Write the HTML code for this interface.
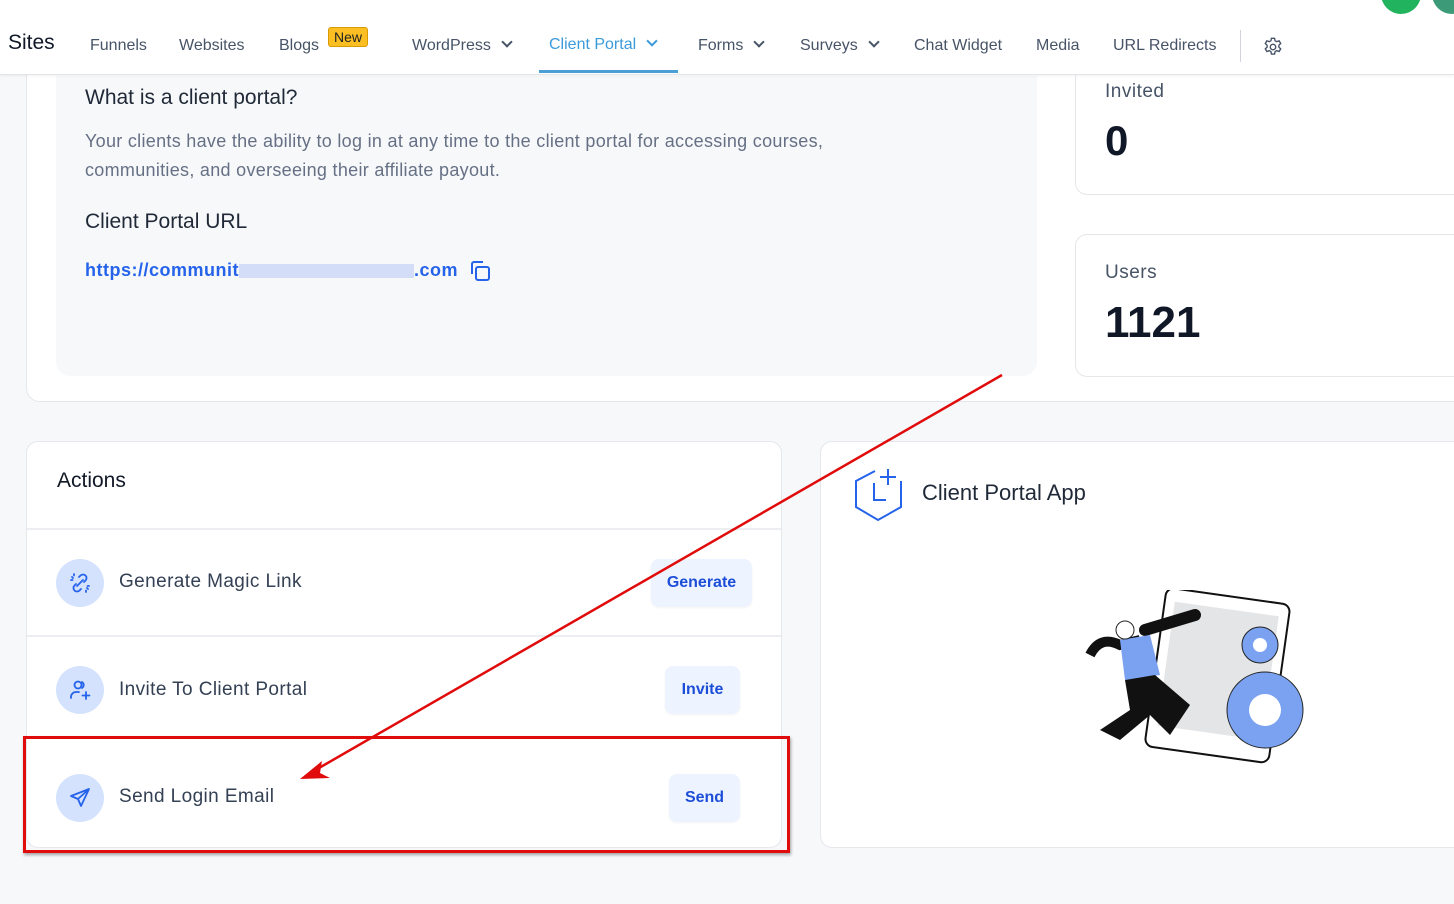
<!DOCTYPE html>
<html><head><meta charset="utf-8"><style>
*{box-sizing:border-box;margin:0;padding:0}
body{width:1454px;height:904px;overflow:hidden;background:#f7f8fa;font-family:"Liberation Sans",sans-serif;position:relative;color:#1f2937}
.nav{position:absolute;left:0;top:0;width:1454px;height:75px;background:#fff;border-bottom:1px solid #e3e5e8;box-shadow:0 1px 3px rgba(0,0,0,.06);z-index:10}
.nav span{position:absolute;top:37px;font-size:16px;color:#475467}
.chev{display:inline-block;width:8px;height:8px;border-right:2px solid #475467;border-bottom:2px solid #475467;transform:rotate(45deg);margin-left:12px;position:relative;top:-4px}
.abs{position:absolute}
.card{position:absolute;background:#fff;border:1px solid #e5e7eb;border-radius:12px}
.btn{position:absolute;background:#eef4ff;color:#1d4ed8;font-weight:bold;font-size:16px;border-radius:8px;text-align:center;box-shadow:0 1px 2px rgba(0,0,0,.05)}
.ic{position:absolute;left:56px;width:48px;height:48px;border-radius:50%;background:#d4e2fd}
.rowt{position:absolute;left:119px;font-size:19px;color:#344054;letter-spacing:.4px}
</style></head><body>
<div class="nav">
<span style="left:8px;top:31px;font-size:21px;color:#111827">Sites</span>
<span style="left:90px">Funnels</span>
<span style="left:179px">Websites</span>
<span style="left:279px">Blogs</span>
<span style="left:328px;top:27px;background:#fbbf24;border:1px solid #d99a00;border-radius:3px;font-size:14px;color:#222;padding:0 5px;line-height:18px">New</span>
<span style="left:412px">WordPress<i class="chev"></i></span>
<span style="left:549px;top:36px;color:#3b9ad9">Client Portal<i class="chev" style="border-color:#3b9ad9"></i></span>
<div class="abs" style="left:539px;top:70px;width:139px;height:3px;background:#4b9fd5"></div>
<span style="left:698px">Forms<i class="chev"></i></span>
<span style="left:800px">Surveys<i class="chev"></i></span>
<span style="left:914px">Chat Widget</span>
<span style="left:1036px">Media</span>
<span style="left:1113px">URL Redirects</span>
<div class="abs" style="left:1240px;top:30px;width:1px;height:32px;background:#d1d5db"></div>
<svg class="abs" style="left:1262px;top:36px" width="22" height="22" viewBox="0 0 24 24" fill="none" stroke="#475467" stroke-width="1.5"><path d="M10.3 2.5h3.4l.6 2.7 1.8 1 2.6-.9 1.7 2.9-2 1.9v2l2 1.9-1.7 2.9-2.6-.9-1.8 1-.6 2.7h-3.4l-.6-2.7-1.8-1-2.6.9-1.7-2.9 2-1.9v-2l-2-1.9 1.7-2.9 2.6.9 1.8-1z"/><circle cx="12" cy="12" r="3"/></svg>
<div class="abs" style="left:1381px;top:-26px;width:40px;height:40px;border-radius:50%;background:#22b35e"></div>
<div class="abs" style="left:1432px;top:-26px;width:40px;height:40px;border-radius:50%;background:#3d9a78"></div>
</div>

<div class="card" style="left:26px;top:60px;width:1460px;height:342px;border-radius:14px"></div>
<div class="abs" style="left:56px;top:76px;width:981px;height:300px;background:#f7f8fa;border-radius:0 0 14px 14px"></div>
<div class="abs" style="left:85px;top:86px;font-size:21px;color:#1f2937">What is a client portal?</div>
<div class="abs" style="left:85px;top:127px;width:835px;font-size:18px;line-height:29px;color:#667085;letter-spacing:.3px">Your clients have the ability to log in at any time to the client portal for accessing courses, communities, and overseeing their affiliate payout.</div>
<div class="abs" style="left:85px;top:210px;font-size:21px;color:#1f2937">Client Portal URL</div>
<div class="abs" style="left:85px;top:260px;font-size:18px;font-weight:bold;color:#2563eb;letter-spacing:.5px">https://communit<span style="display:inline-block;width:175px;height:14px;background:#c9d6f7;opacity:.8;vertical-align:middle"></span>.com</div>
<svg class="abs" style="left:468px;top:259px" width="24" height="24" viewBox="0 0 24 24" fill="none" stroke="#2563eb" stroke-width="2"><rect x="8" y="8" width="13" height="13" rx="2"/><path d="M4 15V5a2 2 0 0 1 2-2h9"/></svg>

<div class="card" style="left:1075px;top:40px;width:420px;height:155px"></div>
<div class="abs" style="left:1105px;top:81px;font-size:19px;color:#475467;letter-spacing:.5px">Invited</div>
<div class="abs" style="left:1105px;top:117px;font-size:42px;font-weight:bold;color:#101828">0</div>
<div class="card" style="left:1075px;top:234px;width:420px;height:143px"></div>
<div class="abs" style="left:1105px;top:262px;font-size:19px;color:#475467;letter-spacing:.5px">Users</div>
<div class="abs" style="left:1105px;top:298px;font-size:44px;font-weight:bold;color:#101828">1121</div>

<div class="card" style="left:26px;top:441px;width:756px;height:407px"></div>
<div class="abs" style="left:57px;top:469px;font-size:21px;color:#111827">Actions</div>
<div class="abs" style="left:27px;top:528px;width:754px;height:2px;background:#eceef1"></div>
<div class="abs" style="left:27px;top:635px;width:754px;height:2px;background:#eceef1"></div>
<div class="ic" style="top:559px"><svg style="margin:12px" width="24" height="24" viewBox="0 0 24 24" fill="none" stroke="#2563eb" stroke-width="1.8" stroke-linecap="round"><path d="M9 15l6-6M11 6l1.5-1.5a3.5 3.5 0 0 1 5 5L16 11M13 18l-1.5 1.5a3.5 3.5 0 0 1-5-5L8 13M4 6l1 1M6 3v1.5M3 9h1.5M20 18l-1-1M18 21v-1.5M21 15h-1.5"/></svg></div>
<div class="rowt" style="top:571px">Generate Magic Link</div>
<div class="btn" style="left:651px;top:559px;width:101px;height:48px;line-height:48px">Generate</div>
<div class="ic" style="top:666px"><svg style="margin:12px" width="24" height="24" viewBox="0 0 24 24" fill="none" stroke="#2563eb" stroke-width="1.8" stroke-linecap="round"><circle cx="10" cy="7" r="3.5"/><path d="M3 20v-1a5 5 0 0 1 5-5h3M18 14v7M14.5 17.5h7M14 4a3.5 3.5 0 0 1 0 6"/></svg></div>
<div class="rowt" style="top:679px">Invite To Client Portal</div>
<div class="btn" style="left:665px;top:666px;width:75px;height:48px;line-height:48px">Invite</div>
<div class="ic" style="top:774px"><svg style="margin:12px" width="24" height="24" viewBox="0 0 24 24" fill="none" stroke="#2563eb" stroke-width="1.8" stroke-linejoin="round"><path d="M21 3L3 10l7 3 3 7zM21 3L10 13"/></svg></div>
<div class="rowt" style="top:786px">Send Login Email</div>
<div class="btn" style="left:669px;top:774px;width:71px;height:48px;line-height:48px">Send</div>
<div class="abs" style="left:23px;top:736px;width:767px;height:117px;border:3px solid #e00b0b;box-shadow:1px 2px 3px rgba(0,0,0,.35)"></div>

<div class="card" style="left:820px;top:441px;width:680px;height:407px"></div>
<svg class="abs" style="left:853px;top:466px" width="52" height="56" viewBox="0 0 52 56" fill="none" stroke="#2563eb" stroke-width="2"><path d="M22 5L3 15v26l22 13 23-13V15M35 3v16M27 11h16M21 17v17h12"/></svg>
<div class="abs" style="left:922px;top:480px;font-size:22px;color:#1f2937">Client Portal App</div>
<svg class="abs" style="left:1085px;top:590px" width="230" height="175" viewBox="0 0 230 175">
<rect x="70" y="5" width="125" height="160" rx="8" transform="rotate(8 130 85)" fill="#fff" stroke="#111" stroke-width="2"/>
<rect x="80" y="18" width="105" height="125" transform="rotate(8 130 85)" fill="#e4e5e7"/>
<g fill="#7aa2f0" stroke="#222" stroke-width="1"><circle cx="175" cy="55" r="18"/><circle cx="180" cy="120" r="38"/></g>
<circle cx="175" cy="55" r="7" fill="#fff"/><circle cx="180" cy="120" r="16" fill="#fff"/>
<path d="M60 40l50-15" stroke="#111" stroke-width="12" stroke-linecap="round"/>
<path d="M5 65q10-20 30-10l20-5" stroke="#111" stroke-width="10" fill="none"/>
<path d="M35 50l30-5 10 40-35 5z" fill="#7aa2f0"/>
<path d="M40 90l30-5 35 30-20 30-20-20-30 25-20-10 30-20z" fill="#111"/>
<circle cx="40" cy="40" r="9" fill="#fff" stroke="#222"/>
</svg>

<svg class="abs" style="left:0;top:0;pointer-events:none" width="1454" height="904"><line x1="1002" y1="375" x2="312" y2="772" stroke="#e00b0b" stroke-width="2.5"/><path d="M300 779l22-18-2 12 10 5z" fill="#e00b0b"/></svg>
</body></html>
